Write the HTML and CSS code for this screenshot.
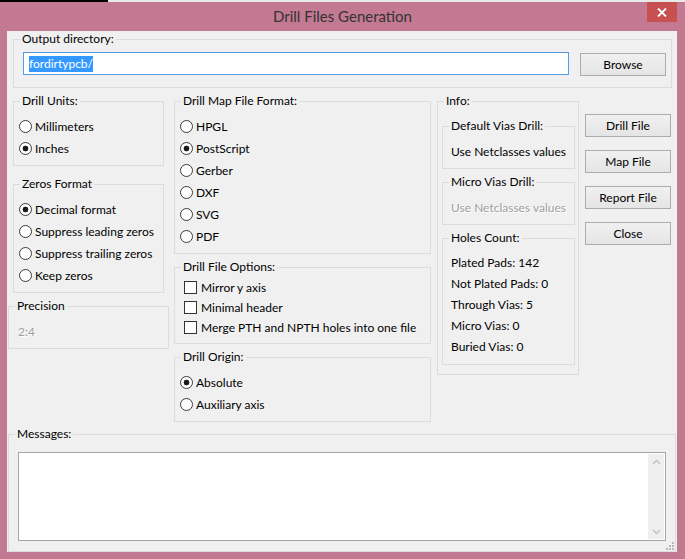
FILE: index.html
```html
<!DOCTYPE html>
<html lang="en">
<head>
<meta charset="utf-8">
<title>Drill Files Generation</title>
<link rel="stylesheet" href="styles.css">
</head>
<body>
<div class="strip"></div>
<div class="window">
  <div class="titlebar">
    <span class="tb-spacer"></span>
    <span class="title">Drill Files Generation</span>
    <span class="close-btn"><svg width="10" height="9" viewBox="0 0 10 9"><path d="M1 0.5 L9 8.5 M9 0.5 L1 8.5" stroke="#fff" stroke-width="1.8" fill="none"/></svg></span>
  </div>
  <div class="client">
    <fieldset class="group output-group">
      <legend>Output directory:</legend>
      <div class="output-row">
        <div class="text-input"><span class="sel">fordirtypcb/</span></div>
        <span class="btn browse">Browse</span>
      </div>
    </fieldset>

    <div class="main">
      <div class="col-left">
        <fieldset class="group units">
          <legend>Drill Units:</legend>
          <div class="opts radios">
            <div class="opt"><span class="radio"></span><span>Millimeters</span></div>
            <div class="opt"><span class="radio checked"></span><span>Inches</span></div>
          </div>
        </fieldset>
        <fieldset class="group zeros">
          <legend>Zeros Format</legend>
          <div class="opts radios">
            <div class="opt"><span class="radio checked"></span><span>Decimal format</span></div>
            <div class="opt"><span class="radio"></span><span>Suppress leading zeros</span></div>
            <div class="opt"><span class="radio"></span><span>Suppress trailing zeros</span></div>
            <div class="opt"><span class="radio"></span><span>Keep zeros</span></div>
          </div>
        </fieldset>
        <fieldset class="group precision">
          <legend>Precision</legend>
          <div class="opts prec"><div class="opt disabled">2:4</div></div>
        </fieldset>
      </div>

      <div class="col-mid">
        <fieldset class="group mapfmt">
          <legend>Drill Map File Format:</legend>
          <div class="opts radios">
            <div class="opt"><span class="radio"></span><span>HPGL</span></div>
            <div class="opt"><span class="radio checked"></span><span>PostScript</span></div>
            <div class="opt"><span class="radio"></span><span>Gerber</span></div>
            <div class="opt"><span class="radio"></span><span>DXF</span></div>
            <div class="opt"><span class="radio"></span><span>SVG</span></div>
            <div class="opt"><span class="radio"></span><span>PDF</span></div>
          </div>
        </fieldset>
        <fieldset class="group fileopts">
          <legend>Drill File Options:</legend>
          <div class="opts checks">
            <div class="opt"><span class="check"></span><span>Mirror y axis</span></div>
            <div class="opt"><span class="check"></span><span>Minimal header</span></div>
            <div class="opt"><span class="check"></span><span>Merge PTH and NPTH holes into one file</span></div>
          </div>
        </fieldset>
        <fieldset class="group origin">
          <legend>Drill Origin:</legend>
          <div class="opts radios">
            <div class="opt"><span class="radio checked"></span><span>Absolute</span></div>
            <div class="opt"><span class="radio"></span><span>Auxiliary axis</span></div>
          </div>
        </fieldset>
      </div>

      <fieldset class="group info">
        <legend>Info:</legend>
        <div class="info-body">
          <fieldset class="group sub">
            <legend>Default Vias Drill:</legend>
            <div class="opts sub-opts"><div class="opt">Use Netclasses values</div></div>
          </fieldset>
          <fieldset class="group sub">
            <legend>Micro Vias Drill:</legend>
            <div class="opts sub-opts"><div class="opt disabled">Use Netclasses values</div></div>
          </fieldset>
          <fieldset class="group sub holes">
            <legend>Holes Count:</legend>
            <div class="opts holes-opts">
              <div class="opt">Plated Pads: 142</div>
              <div class="opt">Not Plated Pads: 0</div>
              <div class="opt">Through Vias: 5</div>
              <div class="opt">Micro Vias: 0</div>
              <div class="opt">Buried Vias: 0</div>
            </div>
          </fieldset>
        </div>
      </fieldset>

      <div class="col-buttons">
        <span class="btn">Drill File</span>
        <span class="btn">Map File</span>
        <span class="btn">Report File</span>
        <span class="btn">Close</span>
      </div>
    </div>

    <fieldset class="group messages">
      <legend>Messages:</legend>
      <div class="msg-wrap">
        <div class="msg-box">
          <div class="msg-text"></div>
          <div class="scrollbar">
            <svg width="9" height="6" viewBox="0 0 9 6"><path d="M1 5 L4.5 1.5 L8 5" stroke="#c2c2c2" stroke-width="1.5" fill="none"/></svg>
            <svg width="9" height="6" viewBox="0 0 9 6"><path d="M1 1 L4.5 4.5 L8 1" stroke="#c2c2c2" stroke-width="1.5" fill="none"/></svg>
          </div>
        </div>
      </div>
    </fieldset>

    <svg class="grip" width="9" height="9" viewBox="0 0 9 9">
      <rect x="6" y="0" width="2" height="2" fill="#b8b8b8"/>
      <rect x="3" y="3" width="2" height="2" fill="#b8b8b8"/>
      <rect x="6" y="3" width="2" height="2" fill="#b8b8b8"/>
      <rect x="0" y="6" width="2" height="2" fill="#b8b8b8"/>
      <rect x="3" y="6" width="2" height="2" fill="#b8b8b8"/>
      <rect x="6" y="6" width="2" height="2" fill="#b8b8b8"/>
    </svg>
  </div>
</div>
</body>
</html>
```

FILE: styles.css
```css
* { box-sizing: border-box; }
html, body { margin: 0; padding: 0; }
body {
  width: 685px;
  height: 559px;
  overflow: hidden;
  background: #c37991;
  font-family: Lato, "Segoe UI", sans-serif;
  font-size: 12px;
  color: #000;
}
.strip {
  height: 2px;
  background: linear-gradient(to right, #000 0 108px, #e9e9e9 108px);
}
.window {
  height: 557px;
  background: #c37991;
  padding: 0 8px 7px 7px;
  display: flex;
  flex-direction: column;
}
.titlebar {
  height: 29px;
  margin: 0 -8px 0 -7px;
  display: grid;
  grid-template-columns: 1fr auto 1fr;
  align-items: start;
}
.title {
  font-size: 15px;
  line-height: 29px;
  color: #333;
}
.close-btn {
  justify-self: end;
  margin-right: 8px;
  width: 30px;
  height: 20px;
  background: #c75050;
  display: flex;
  align-items: center;
  justify-content: center;
}
.client {
  height: 521px;
  background: #f0f0f0;
  position: relative;
}

/* group boxes */
.group {
  margin: 0;
  padding: 0;
  border: 1px solid #dcdcdc;
  min-width: 0;
}
.group > legend {
  margin-left: 6px;
  padding: 0 2px;
  height: 16px;
  line-height: 16px;
  white-space: nowrap;
}

.output-group {
  margin: 0 5px 0 6px;
}
.output-row {
  display: flex;
  align-items: flex-start;
  padding: 5px 0 11px 9px;
}
.text-input {
  width: 546px;
  height: 23px;
  background: #fff;
  border: 1px solid #569de5;
  display: flex;
  align-items: center;
  padding-left: 5px;
}
.sel {
  background: #3399ff;
  color: #fff;
  line-height: 16px;
}
.btn {
  display: flex;
  align-items: center;
  justify-content: center;
  width: 86px;
  height: 23px;
  border: 1px solid #acacac;
  background: linear-gradient(#f0f0f0, #e5e5e5);
  color: #000;
}
.browse {
  margin: 1px 0 0 11px;
}

/* main area */
.main {
  display: flex;
  align-items: flex-start;
  margin: 5px 0 0 1px;
}
.col-left {
  width: 161px;
  display: flex;
  flex-direction: column;
}
.col-mid {
  width: 257px;
  margin-left: 5px;
  display: flex;
  flex-direction: column;
}
.units, .zeros {
  margin-left: 5px;
  width: 151px;
}
.zeros { margin-top: 10px; }
.precision { margin-top: 5px; }
.fileopts, .origin { margin-top: 5px; }

.opts { padding: 6px 0; }
.opt {
  display: flex;
  align-items: center;
  height: 22px;
  white-space: nowrap;
}
.radios { padding-left: 5px; }
.checks { padding: 2px 0 6px 9px; }
.checks .opt { height: 20px; }
.prec { padding-left: 9px; }
.disabled {
  color: #a0a0a0;
  text-shadow: 1px 1px 0 #fff;
}

.radio {
  flex: none;
  width: 13px;
  height: 13px;
  border: 1px solid #3c3c3c;
  border-radius: 50%;
  background: #fff;
  margin-right: 3px;
}
.radio.checked {
  background: radial-gradient(circle, #1a1a1a 0 2.6px, #fff 3.2px);
}
.check {
  flex: none;
  width: 13px;
  height: 13px;
  border: 1px solid #333;
  background: #fff;
  margin-right: 4px;
}

.info {
  width: 142px;
  margin-left: 6px;
}
.info-body {
  padding: 9px 3px 9px 4px;
  display: flex;
  flex-direction: column;
}
.sub + .sub { margin-top: 5px; }
.sub-opts { padding-left: 8px; }
.holes-opts { padding: 6px 0 7px 8px; }
.holes-opts .opt { height: 21px; }

.col-buttons {
  width: 86px;
  margin-left: 6px;
  padding-top: 21px;
  display: flex;
  flex-direction: column;
  gap: 13px;
}

/* messages */
.messages {
  margin: 4px 1px 0 1px;
}
.msg-wrap {
  padding: 10px 9px 10px 9px;
}
.msg-box {
  height: 89px;
  background: #fff;
  border: 1px solid #a5a5a5;
  display: flex;
  justify-content: flex-end;
  padding: 1px;
}
.msg-text { flex: 1; }
.scrollbar {
  width: 16px;
  background: #efefef;
  display: flex;
  flex-direction: column;
  align-items: center;
  justify-content: space-between;
  padding: 5px 0 4px;
}
.grip {
  position: absolute;
  right: 2px;
  bottom: 1px;
}
```
